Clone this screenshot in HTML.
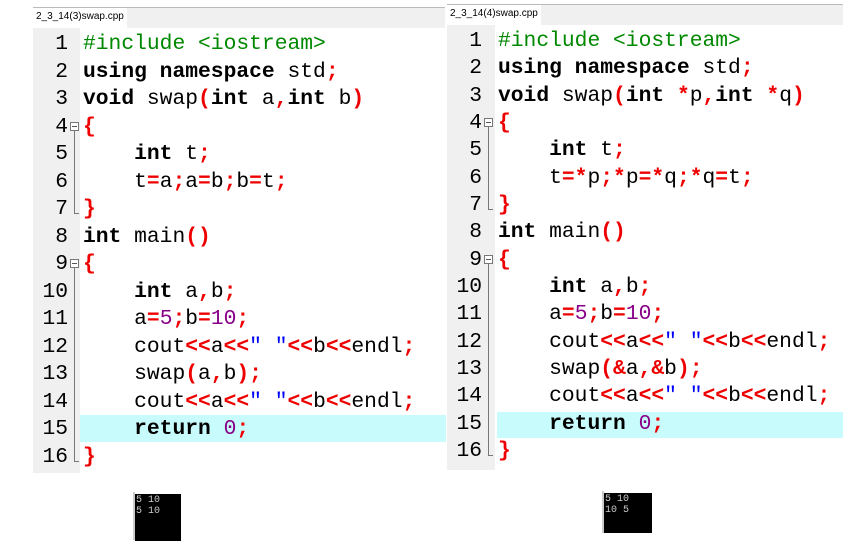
<!DOCTYPE html><html><head><style>
body{margin:0;width:853px;height:552px;background:#fff;position:relative;overflow:hidden;font-family:"Liberation Mono",monospace}
.tab{position:absolute;font:10px "Liberation Sans",sans-serif;background:#fff;padding:3px 3px;color:#000}
.bar{position:absolute;height:20px;background:#f0f0f0;border-top:1px solid #bbb}
.g{position:absolute;background:#f0f0f0}
.ln{position:absolute;font-size:21.3px;text-align:right;width:30px;color:#000}
.c{position:absolute;font-size:21.3px;white-space:pre;color:#000}
.k{font-weight:bold}.o{color:#e00;font-weight:bold}.s{color:#00f}.n{color:#808}.p{color:#080}
.hl{position:absolute;background:#c8fcfc}
.fb{position:absolute;width:9px;height:9px;border:1px solid #777;background:#fff;box-sizing:border-box}
.fb:after{content:"";position:absolute;left:1px;top:3px;width:5px;height:1px;background:#555}
.fl{position:absolute;width:1px;background:#777}
.ft{position:absolute;height:1px;width:5px;background:#777}
.con{position:absolute;background:#000;color:#ccc;font:10px "Liberation Mono",monospace;line-height:11px;padding:1px 1px}
</style></head><body>
<div class="bar" style="left:33px;top:7px;width:412px"></div>
<div class="tab" style="left:33px;top:8px;height:14px">2_3_14(3)swap.cpp</div>
<div class="g" style="left:33px;top:28px;width:47px;height:445px"></div>
<div class="hl" style="left:80px;top:415px;width:366px;height:27px"></div>

<div class="bar" style="left:447px;top:4px;width:396px"></div>
<div class="tab" style="left:447px;top:5px;height:14px">2_3_14(4)swap.cpp</div>
<div class="g" style="left:447px;top:25px;width:48px;height:445px"></div>
<div class="hl" style="left:497px;top:412px;width:346px;height:26px"></div>

<div id="L"></div><div id="R"></div>

<div class="con" style="left:135px;top:494px;width:44px;height:45px">5 10<br>5 10</div>
<div style="position:absolute;left:133px;top:492px;width:2px;height:48px;background:#ccc"></div>
<div class="con" style="left:604px;top:493px;width:46px;height:38px">5 10<br>10 5</div>
<div style="position:absolute;left:602px;top:491px;width:2px;height:42px;background:#ccc"></div>

<script>
const code=[
'<span class="p">#include &lt;iostream&gt;</span>',
'<span class="k">using namespace</span> std<span class="o">;</span>',
'<span class="k">void</span> swap<span class="o">(</span><span class="k">int</span> a<span class="o">,</span><span class="k">int</span> b<span class="o">)</span>',
'<span class="o">{</span>',
'    <span class="k">int</span> t<span class="o">;</span>',
'    t<span class="o">=</span>a<span class="o">;</span>a<span class="o">=</span>b<span class="o">;</span>b<span class="o">=</span>t<span class="o">;</span>',
'<span class="o">}</span>',
'<span class="k">int</span> main<span class="o">()</span>',
'<span class="o">{</span>',
'    <span class="k">int</span> a<span class="o">,</span>b<span class="o">;</span>',
'    a<span class="o">=</span><span class="n">5</span><span class="o">;</span>b<span class="o">=</span><span class="n">10</span><span class="o">;</span>',
'    cout<span class="o">&lt;&lt;</span>a<span class="o">&lt;&lt;</span><span class="s">" "</span><span class="o">&lt;&lt;</span>b<span class="o">&lt;&lt;</span>endl<span class="o">;</span>',
'    swap<span class="o">(</span>a<span class="o">,</span>b<span class="o">);</span>',
'    cout<span class="o">&lt;&lt;</span>a<span class="o">&lt;&lt;</span><span class="s">" "</span><span class="o">&lt;&lt;</span>b<span class="o">&lt;&lt;</span>endl<span class="o">;</span>',
'    <span class="k">return</span> <span class="n">0</span><span class="o">;</span>',
'<span class="o">}</span>'];
const code2=code.slice();
code2[2]='<span class="k">void</span> swap<span class="o">(</span><span class="k">int</span> <span class="o">*</span>p<span class="o">,</span><span class="k">int</span> <span class="o">*</span>q<span class="o">)</span>';
code2[5]='    t<span class="o">=*</span>p<span class="o">;*</span>p<span class="o">=*</span>q<span class="o">;*</span>q<span class="o">=</span>t<span class="o">;</span>';
code2[12]='    swap<span class="o">(&amp;</span>a<span class="o">,&amp;</span>b<span class="o">);</span>';
function build(id,c,gx,cx,y0,dy){
 let h='';
 for(let i=0;i<16;i++){
  const y=y0+i*dy;
  h+=`<div class="ln" style="left:${gx}px;top:${y-13}px;line-height:27px">${i+1}</div>`;
  h+=`<div class="c" style="left:${cx}px;top:${y-13}px;line-height:27px">${c[i]}</div>`;
 }
 const fx=gx+36;
 [[3,6],[8,15]].forEach(([a,b])=>{
  const ya=y0+a*dy, yb=y0+b*dy;
  h+=`<div class="fb" style="left:${fx-4}px;top:${ya-5}px"></div>`;
  h+=`<div class="fl" style="left:${fx}px;top:${ya+4}px;height:${yb-ya}px"></div>`;
  h+=`<div class="ft" style="left:${fx}px;top:${yb+4}px"></div>`;
 });
 document.getElementById(id).innerHTML=h;
}
build('L',code,38,83,44,27.53);
build('R',code2,452,498,41,27.33);
</script>
</body></html>
